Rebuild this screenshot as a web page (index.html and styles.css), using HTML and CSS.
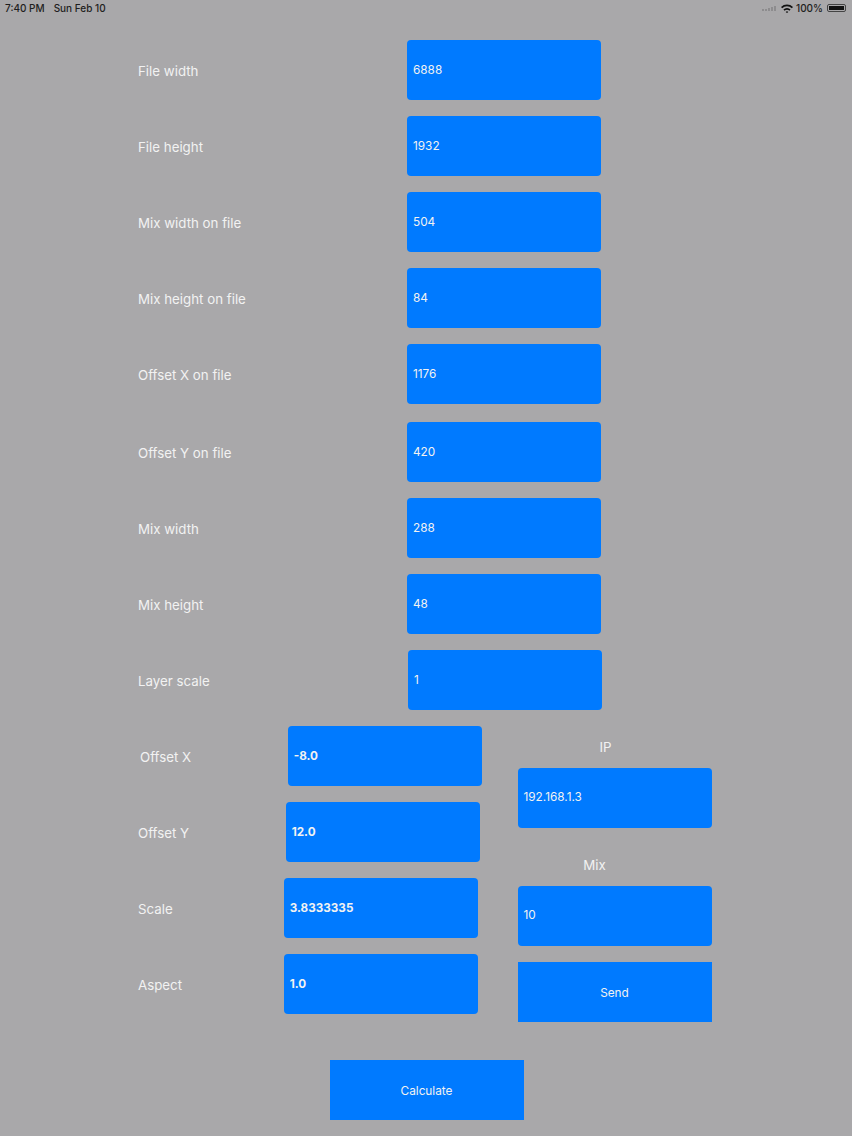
FILE: index.html
```html
<!DOCTYPE html>
<html lang="en">
<head>
    <meta charset="UTF-8">
    <meta name="viewport" content="width=device-width, initial-scale=1.0">
    <title>Mix Calculator</title>
    <link rel="stylesheet" href="styles.css">
</head>
<body>
    <div class="status-bar">
        <div class="status-left">
            <span>7:40 PM</span>
            <span>Sun Feb 10</span>
        </div>
        <div class="status-right">
            <svg class="signal" width="15" height="6" viewBox="0 0 15 6">
                <rect x="0" y="4" width="2" height="2"></rect>
                <rect x="3" y="4" width="2" height="2"></rect>
                <rect x="6" y="3" width="2" height="3"></rect>
                <rect x="9" y="2" width="2" height="4"></rect>
                <rect x="12" y="1" width="2" height="5"></rect>
            </svg>
            <svg class="wifi" width="12" height="9" viewBox="0 0 12 9">
                <path d="M0 3 A8.500 8.500 0 0 1 12 3 L10.800 4.300 A6.700 6.700 0 0 0 1.200 4.300 Z"></path>
                <path d="M2.400 5.500 A5 5 0 0 1 9.600 5.500 L8.400 6.800 A3.200 3.200 0 0 0 3.600 6.800 Z"></path>
                <path d="M4.700 7.900 A2 2 0 0 1 7.300 7.900 L6 9 Z"></path>
            </svg>
            <span>100%</span>
            <div class="battery"><div class="battery-fill"></div></div>
        </div>
    </div>

    <div class="form">
        <div class="row"><div class="label">File width</div><div class="field">6888</div></div>
        <div class="row"><div class="label">File height</div><div class="field">1932</div></div>
        <div class="row"><div class="label">Mix width on file</div><div class="field">504</div></div>
        <div class="row"><div class="label">Mix height on file</div><div class="field">84</div></div>
        <div class="row"><div class="label">Offset X on file</div><div class="field">1176</div></div>
        <div class="row row-shifted"><div class="label">Offset Y on file</div><div class="field">420</div></div>
        <div class="row"><div class="label">Mix width</div><div class="field">288</div></div>
        <div class="row"><div class="label">Mix height</div><div class="field">48</div></div>
        <div class="row row-layer"><div class="label">Layer scale</div><div class="field">1</div></div>

        <div class="lower">
            <div class="results">
                <div class="row row-x"><div class="label">Offset X</div><div class="field field-bold">-8.0</div></div>
                <div class="row row-y"><div class="label">Offset Y</div><div class="field field-bold">12.0</div></div>
                <div class="row row-scale"><div class="label">Scale</div><div class="field field-bold">3.8333335</div></div>
                <div class="row row-scale"><div class="label">Aspect</div><div class="field field-bold">1.0</div></div>
            </div>
            <div class="remote">
                <div class="remote-label remote-label-ip">IP</div>
                <div class="field">192.168.1.3</div>
                <div class="remote-label remote-label-mix">Mix</div>
                <div class="field">10</div>
                <button class="button button-send">Send</button>
            </div>
        </div>
    </div>

    <button class="button button-calc">Calculate</button>
</body>
</html>
```

FILE: styles.css
```css
body {
    margin: 0;
    height: 1136px;
    overflow: hidden;
    background-color: #a9a8aa;
    color: #f2f2f2;
    font-family: Inter, "Liberation Sans", sans-serif;
}
.status-bar {
    height: 16px;
    padding: 0 6px 0 5px;
    display: flex;
    justify-content: space-between;
    align-items: center;
    color: #1e1e20;
    font-size: 10px;
    font-weight: 500;
}
.status-left {
    display: flex;
    gap: 9px;
}
.status-right {
    display: flex;
    align-items: center;
    gap: 3px;
}
.signal {
    fill: #8d8c8e;
    margin-right: 1px;
}
.wifi {
    fill: #111;
}
.battery {
    width: 19px;
    height: 8px;
    margin-left: 1px;
    padding: 1px;
    box-sizing: border-box;
    border: 1px solid #444;
    border-radius: 2px;
}
.battery-fill {
    height: 100%;
    background: #111;
}
.form {
    padding: 24px 0 0 138px;
    display: flex;
    flex-direction: column;
    gap: 16px;
}
.row {
    display: flex;
    align-items: center;
}
.row-shifted {
    margin-top: 2px;
}
.label {
    width: 269px;
    padding-top: 2px;
    font-size: 13.3px;
}
.field {
    width: 194px;
    height: 60px;
    padding: 0 6px;
    box-sizing: border-box;
    display: flex;
    align-items: center;
    background: #007aff;
    border-radius: 4px;
    font-size: 11.8px;
}
.field-bold {
    font-weight: 700;
    font-size: 11.7px;
}
.row-layer .label {
    width: 270px;
}
.lower {
    display: flex;
}
.results {
    width: 379.500px;
    display: flex;
    flex-direction: column;
    gap: 16px;
}
.row-x .label {
    width: 147.700px;
    margin-left: 2px;
}
.row-y .label {
    width: 147.700px;
}
.row-scale .label {
    width: 145.700px;
}
.remote {
    width: 194px;
    display: flex;
    flex-direction: column;
    padding-top: 12px;
}
.remote .field {
    padding-bottom: 2px;
}
.remote-label {
    height: 18px;
    margin-bottom: 12px;
    text-align: center;
    font-size: 13.3px;
    line-height: 18px;
}
.remote-label-ip {
    margin-left: -18px;
}
.remote-label-mix {
    margin: 28px 0 12px -40px;
}
.button {
    display: block;
    width: 194px;
    height: 60px;
    padding: 2px 0 0;
    border: none;
    background: #007aff;
    color: #f2f2f2;
    font-family: inherit;
    font-size: 11.8px;
}
.button-send {
    margin-top: 16px;
}
.button-calc {
    margin: 38px 0 0 329.500px;
}
```
